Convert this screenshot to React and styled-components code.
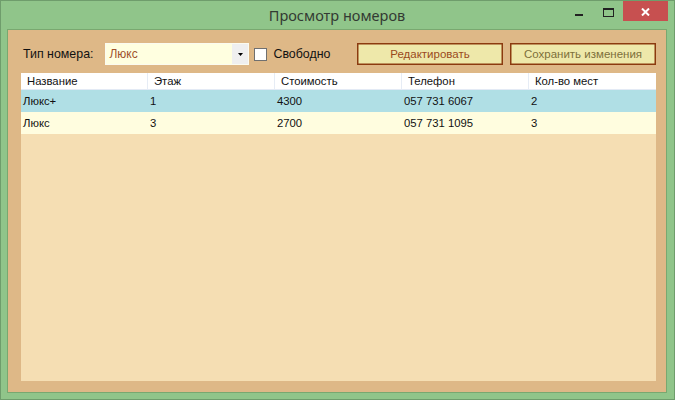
import React from "react";
import styled, { createGlobalStyle } from "styled-components";

const GlobalStyle = createGlobalStyle`
  html, body {
    margin: 0;
    padding: 0;
    background: #90c58a;
  }
  * {
    box-sizing: border-box;
  }
`;

const columns = ["Название", "Этаж", "Стоимость", "Телефон", "Кол-во мест"];

const rooms = [
  { name: "Люкс+", floor: "1", price: "4300", phone: "057 731 6067", places: "2" },
  { name: "Люкс", floor: "3", price: "2700", phone: "057 731 1095", places: "3" },
];

const App = () => {
  return (
    <Window>
      <GlobalStyle />
      <TitleBar>
        <Title>Просмотр номеров</Title>
        <Controls>
          <MinButton>
            <span />
          </MinButton>
          <MaxButton>
            <span />
          </MaxButton>
          <CloseButton>
            <svg width="9" height="8" viewBox="0 0 9 8">
              <path d="M1 0.5 L8 7.5 M8 0.5 L1 7.5" stroke="#fff" strokeWidth="2" />
            </svg>
          </CloseButton>
        </Controls>
      </TitleBar>
      <Client>
        <Toolbar>
          <Label>Тип номера:</Label>
          <Combo>
            <ComboText>Люкс</ComboText>
            <ComboArrow>
              <svg width="5" height="3" viewBox="0 0 5 3">
                <path d="M0 0 H5 L2.5 3 Z" fill="#000" />
              </svg>
            </ComboArrow>
          </Combo>
          <Check>
            <CheckBox />
            <Label>Свободно</Label>
          </Check>
          <Buttons>
            <Button $color="#9a4a1c">Редактировать</Button>
            <Button $color="#7d6f3a">Сохранить изменения</Button>
          </Buttons>
        </Toolbar>
        <Grid>
          <HeaderRow>
            {columns.map((c, i) => (
              <HeaderCell key={c} $last={i === columns.length - 1}>
                {c}
              </HeaderCell>
            ))}
          </HeaderRow>
          {rooms.map((r, i) => (
            <Row key={r.phone} $bg={i === 0 ? "#b0dfe5" : "#fffddf"}>
              <Cell>{r.name}</Cell>
              <Cell>{r.floor}</Cell>
              <Cell>{r.price}</Cell>
              <Cell>{r.phone}</Cell>
              <Cell>{r.places}</Cell>
            </Row>
          ))}
        </Grid>
      </Client>
    </Window>
  );
};

export default App;

const Window = styled.div`
  width: 675px;
  height: 400px;
  border: 1px solid #6f9d6c;
  background: #90c58a;
  display: flex;
  flex-direction: column;
  padding: 0 7px 6px 6px;
`;

const TitleBar = styled.div`
  height: 28px;
  position: relative;
  display: flex;
  align-items: center;
  justify-content: center;
`;

const Title = styled.div`
  font-family: "Noto Sans", "Open Sans", sans-serif;
  font-size: 14.5px;
  color: #333a33;
  margin-top: -1px;
`;

const Controls = styled.div`
  position: absolute;
  right: -1px;
  top: 0;
  display: flex;
  align-items: flex-start;
  height: 20px;
`;

const MinButton = styled.div`
  width: 28px;
  height: 20px;
  position: relative;
  span {
    position: absolute;
    left: 4px;
    top: 13px;
    width: 8px;
    height: 2px;
    background: #222;
  }
`;

const MaxButton = styled.div`
  width: 24px;
  height: 20px;
  position: relative;
  span {
    position: absolute;
    left: 4px;
    top: 7px;
    width: 11px;
    height: 9px;
    border: 1px solid #222;
    border-top-width: 2px;
  }
`;

const CloseButton = styled.div`
  width: 45px;
  height: 20px;
  background: #c75050;
  display: flex;
  align-items: center;
  justify-content: center;
  padding-top: 1px;
`;

const Client = styled.div`
  flex: 1;
  background: #deb887;
  border: 1px solid #79a870;
  padding: 13px 10px 11px 13px;
  display: flex;
  flex-direction: column;
  gap: 8px;
`;

const Toolbar = styled.div`
  height: 22px;
  display: flex;
  align-items: center;
`;

const Label = styled.span`
  font-family: "Liberation Sans", Arial, sans-serif;
  font-size: 12.4px;
  color: #111;
  margin-left: 2px;
`;

const Combo = styled.div`
  margin-left: 12px;
  width: 144px;
  height: 22px;
  background: #ffffe0;
  border: 1px solid #fbfbf0;
  display: flex;
  align-items: stretch;
`;

const ComboText = styled.div`
  flex: 1;
  display: flex;
  align-items: center;
  padding-left: 3px;
  font-family: "Liberation Sans", Arial, sans-serif;
  font-size: 12px;
  color: #a0522d;
`;

const ComboArrow = styled.div`
  width: 16px;
  background: #efefef;
  display: flex;
  align-items: center;
  justify-content: center;
`;

const Check = styled.div`
  display: flex;
  align-items: center;
  margin-left: 5px;
  gap: 4px;
`;

const CheckBox = styled.div`
  width: 13px;
  height: 13px;
  background: #fff;
  border: 1px solid #707070;
`;

const Buttons = styled.div`
  margin-left: auto;
  display: flex;
  gap: 7px;
`;

const Button = styled.div`
  width: 146px;
  height: 22px;
  background: #eee8aa;
  border: 1px solid #8b3a0f;
  box-shadow: inset 0 0 0 0.5px #8b3a0f;
  display: flex;
  align-items: center;
  justify-content: center;
  font-family: "Liberation Sans", Arial, sans-serif;
  font-size: 11.5px;
  color: ${(p) => p.$color};
`;

const Grid = styled.div`
  flex: 1;
  background: #f5deb3;
  display: flex;
  flex-direction: column;
`;

const HeaderRow = styled.div`
  height: 17px;
  background: #fff;
  border-bottom: 1px solid #e3eaf5;
  display: grid;
  grid-template-columns: repeat(5, 1fr);
`;

const HeaderCell = styled.div`
  display: flex;
  align-items: center;
  padding-left: 6px;
  border-right: ${(p) => (p.$last ? "none" : "1px solid #e6ecf5")};
  font-family: "Liberation Sans", Arial, sans-serif;
  font-size: 11.3px;
  color: #111;
`;

const Row = styled.div`
  height: 22px;
  background: ${(p) => p.$bg};
  display: grid;
  grid-template-columns: repeat(5, 1fr);
`;

const Cell = styled.div`
  display: flex;
  align-items: center;
  padding-left: 2px;
  font-family: "Liberation Sans", Arial, sans-serif;
  font-size: 11.3px;
  color: #111;
`;
